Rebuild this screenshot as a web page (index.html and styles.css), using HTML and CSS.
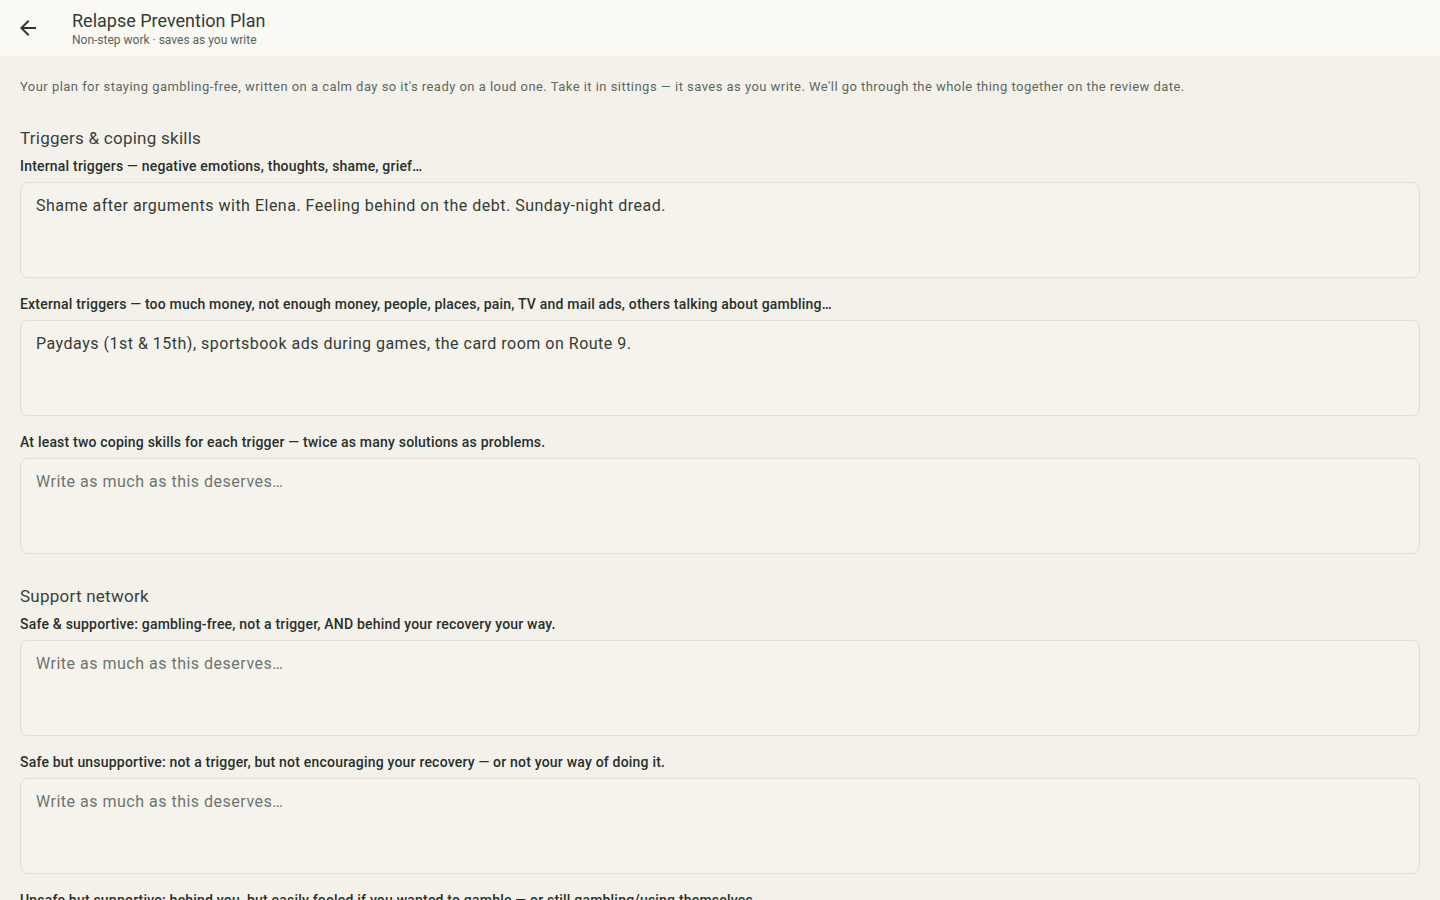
FILE: index.html
```html
<!DOCTYPE html>
<html lang="en">
<head>
<meta charset="utf-8">
<title>Relapse Prevention Plan</title>
<link rel="stylesheet" href="styles.css">
</head>
<body>
<header class="topbar">
  <button class="back" aria-label="Back">
    <svg viewBox="0 0 24 24" width="24" height="24"><path d="M20 11H7.83l5.59-5.59L12 4l-8 8 8 8 1.41-1.41L7.83 13H20v-2z" fill="currentColor"/></svg>
  </button>
  <div class="titles">
    <div class="title">Relapse Prevention Plan</div>
    <div class="subtitle">Non-step work · saves as you write</div>
  </div>
</header>
<main class="content">
  <p class="intro">Your plan for staying gambling-free, written on a calm day so it's ready on a loud one. Take it in sittings — it saves as you write. We'll go through the whole thing together on the review date.</p>

  <section class="section">
    <h2 class="section-title">Triggers &amp; coping skills</h2>
    <div class="field">
      <label class="label">Internal triggers — negative emotions, thoughts, shame, grief…</label>
      <textarea class="box" placeholder="Write as much as this deserves…">Shame after arguments with Elena. Feeling behind on the debt. Sunday-night dread.</textarea>
    </div>
    <div class="field">
      <label class="label">External triggers — too much money, not enough money, people, places, pain, TV and mail ads, others talking about gambling…</label>
      <textarea class="box" placeholder="Write as much as this deserves…">Paydays (1st &amp; 15th), sportsbook ads during games, the card room on Route 9.</textarea>
    </div>
    <div class="field">
      <label class="label">At least two coping skills for each trigger — twice as many solutions as problems.</label>
      <textarea class="box" placeholder="Write as much as this deserves…"></textarea>
    </div>
  </section>

  <section class="section">
    <h2 class="section-title">Support network</h2>
    <div class="field">
      <label class="label">Safe &amp; supportive: gambling-free, not a trigger, AND behind your recovery your way.</label>
      <textarea class="box" placeholder="Write as much as this deserves…"></textarea>
    </div>
    <div class="field">
      <label class="label">Safe but unsupportive: not a trigger, but not encouraging your recovery — or not your way of doing it.</label>
      <textarea class="box" placeholder="Write as much as this deserves…"></textarea>
    </div>
    <div class="field">
      <label class="label">Unsafe but supportive: behind you, but easily fooled if you wanted to gamble — or still gambling/using themselves.</label>
      <textarea class="box" placeholder="Write as much as this deserves…"></textarea>
    </div>
  </section>
</main>
</body>
</html>
```

FILE: styles.css
```css
* { box-sizing: border-box; }
html, body { margin: 0; padding: 0; }
body {
  background: #f4f1eb;
  font-family: Roboto, "Liberation Sans", sans-serif;
  color: #2c3630;
}
.topbar {
  height: 56px;
  background: #fbf9f4;
  display: flex;
  align-items: center;
  padding: 2px 16px 0;
  gap: 32px;
}
.back {
  width: 24px;
  height: 24px;
  padding: 0;
  border: 0;
  background: none;
  color: #2c3630;
  display: flex;
  cursor: pointer;
  margin-top: -2px;
}
.titles { display: flex; flex-direction: column; }
.title {
  font-size: 18px;
  line-height: 22px;
  color: #333c36;
}
.subtitle {
  font-size: 12px;
  line-height: 16px;
  color: #58635c;
}
.content {
  padding: 21px 20px 40px;
}
.intro {
  margin: 0 0 29px;
  font-size: 13px;
  line-height: 20px;
  color: #5d6862;
  letter-spacing: 0.46px;
}
.section {
  display: flex;
  flex-direction: column;
  gap: 16px;
  margin-bottom: 30px;
}
.section-title {
  margin: 0 0 -10px;
  font-size: 17px;
  line-height: 24px;
  font-weight: 400;
  color: #38423c;
  letter-spacing: 0.25px;
}
.field {
  display: flex;
  flex-direction: column;
  gap: 6px;
}
.label {
  font-size: 14px;
  line-height: 20px;
  font-weight: 500;
  color: #27302b;
  letter-spacing: 0.2px;
}
.box {
  display: block;
  width: 100%;
  height: 96px;
  resize: none;
  border: 1px solid #e3dfd3;
  border-radius: 8px;
  background: #f6f3ed;
  padding: 11px 15px;
  font-family: Roboto, "Liberation Sans", sans-serif;
  font-size: 16px;
  line-height: 24px;
  letter-spacing: 0.5px;
  color: #333c36;
  outline: none;
}
.box::placeholder { color: #6c7670; opacity: 1; }
```
